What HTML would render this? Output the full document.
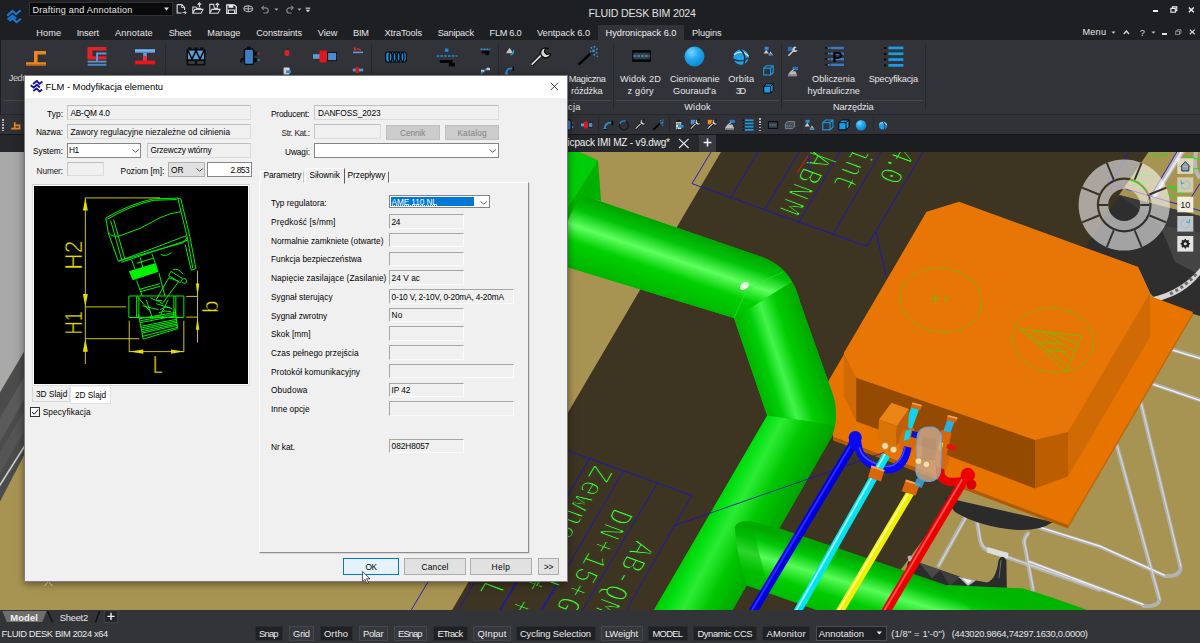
<!DOCTYPE html>
<html lang="pl">
<head>
<meta charset="utf-8">
<title>FLUID DESK BIM 2024</title>
<style>
*{box-sizing:border-box;margin:0;padding:0}
html,body{width:1200px;height:643px;overflow:hidden;background:#1e1f22;font-family:"Liberation Sans","DejaVu Sans",sans-serif;font-size:9px;color:#e4e4e4}
#app{position:absolute;left:0;top:0;width:1200px;height:643px;overflow:hidden}
#app>div,#app>svg{position:absolute}
.t{position:absolute;white-space:nowrap;line-height:1}
.b{position:absolute}
#titlebar{left:0;top:0;width:1200px;height:40px;background:#1e1f22}
#ribbon{left:0;top:40px;width:1200px;height:74px;background:#313338}
#toolbar{left:0;top:114px;width:1200px;height:20px;background:#303237;border-top:1px solid #26282b}
#doctabs{left:0;top:134px;width:1200px;height:18px;background:#1c1d20}
#view{left:0;top:152px}
#bottom{left:0;top:610px;width:1200px;height:33px;background:#323438}
#dlg{left:24px;top:75px;width:544px;height:507px;background:#f0f0f0;border:1px solid #7d7d7d;color:#000;box-shadow:0 2px 8px rgba(0,0,0,.45)}
#dlg .cap{position:absolute;left:0;top:0;width:542px;height:22px;background:#fff}
.fld{position:absolute;background:#f0f0f0;border:1px solid #dcdcdc;border-top-color:#bdbdbd;border-left-color:#c6c6c6}
.inp{position:absolute;background:#fff;border:1px solid #858585}
.btn{position:absolute;background:#e1e1e1;border:1px solid #adadad}
.sb{position:absolute;top:15.5px;height:15px;border:1px solid #46484d;background:#36383d}
.sb.on{background:#202124;border-color:#2a2c30}
.vsep{position:absolute;width:1px;background:#26282b;top:3px;height:67px}
.hsep{position:absolute;height:1px;background:#44474c;top:60px}
</style>
</head>
<body>
<div id="app">
<div id="titlebar"><svg class="b" style="left:5px;top:7.8px" width="18" height="17" viewBox="0 0 18 17" ><g fill="none" stroke="#1b78d0" stroke-width="2.1" stroke-linejoin="miter"><polyline points="2.2,7.6 7.6,3 11,6.2 15.6,2.2"/><polyline points="2.6,11.4 7.6,7.6 11.2,10.8"/><polyline points="4.2,13 7.8,10.4 11.6,14.2 15.8,10.8"/></g></svg><div class="b" style="left:29px;top:1.5px;width:144px;height:14.5px;background:#0a0a0b;border:1px solid #2f3135"></div><span class="t" id="t1" style="left:32.40px;top:5.90px;font-size:9.1px;letter-spacing:0.224px;color:#e6e6e6;">Drafting and Annotation</span><svg class="b" style="left:163px;top:7px" width="7" height="5" viewBox="0 0 7 5" ><polygon points="1,0.6 6,0.6 3.5,3.6" fill="#e0e0e0"/></svg><svg class="b" style="left:176px;top:3px" width="11" height="12" viewBox="0 0 11 12" ><path d="M1.2,1.6 H5.8 L8.6,4.4 V7 M1.2,1.6 V10 H5.6" fill="none" stroke="#d4d4d4" stroke-width="1.2"/><path d="M5.6,1.6 V4.6 H8.6" fill="none" stroke="#d4d4d4" stroke-width="0.9"/><path d="M6.6,9.6 H10 M8.6,8 L10.2,9.6 L8.6,11.2" fill="none" stroke="#d4d4d4" stroke-width="1"/></svg><svg class="b" style="left:192px;top:2px" width="12" height="13" viewBox="0 0 12 13" ><path d="M0.8,11.2 V5 H3.6 L4.6,6.2 H8.6 V7.4 M0.8,11.2 L2.8,7.4 H11 L9,11.2 Z" fill="none" stroke="#d4d4d4" stroke-width="1.1"/><path d="M7.4,5 V1.2 M5.6,2.8 L7.4,0.9 L9.2,2.8" fill="none" stroke="#d4d4d4" stroke-width="1.2"/></svg><svg class="b" style="left:208.5px;top:2px" width="12" height="13" viewBox="0 0 12 13" ><path d="M0.8,11.2 V2.4 H4.6 L5.4,6.2 H8.6 V7.4 M0.8,11.2 L2.8,7.4 H11 L9,11.2 Z" fill="none" stroke="#d4d4d4" stroke-width="1.1"/><path d="M8.4,5.4 V1.6 M6.6,3.2 L8.4,1.3 L10.2,3.2" fill="none" stroke="#d4d4d4" stroke-width="1.2"/></svg><svg class="b" style="left:226px;top:3.5px" width="11" height="10.5" viewBox="0 0 11 10.5" ><path d="M0.8,0.8 H8 L10.2,2.6 V9.6 H0.8 Z" fill="none" stroke="#ececec" stroke-width="1.3"/><rect x="2.6" y="0.8" width="4.8" height="3" fill="#ececec"/><rect x="2.4" y="6" width="6.2" height="3.6" fill="none" stroke="#ececec" stroke-width="1"/></svg><svg class="b" style="left:243px;top:5px" width="11" height="8" viewBox="0 0 11 8" ><ellipse cx="5.3" cy="3.8" rx="4.4" ry="2.9" fill="none" stroke="#b4b4b4" stroke-width="1.1"/><path d="M1,3.8 H9.6 M5.3,1 V6.6" stroke="#b4b4b4" stroke-width="1"/></svg><svg class="b" style="left:261px;top:4.5px" width="9" height="9" viewBox="0 0 9 9" ><path d="M1,2.8 H4.6 A2.6,2.6 0 0 1 4.6,8 H2.4" fill="none" stroke="#858585" stroke-width="1.2"/><path d="M2.8,0.8 L0.9,2.8 L2.8,4.8" fill="none" stroke="#858585" stroke-width="1.2"/></svg><svg class="b" style="left:273.5px;top:7.5px" width="5" height="4" viewBox="0 0 5 4" ><polygon points="0.4,0.4 4.4,0.4 2.4,2.8" fill="#a8a8a8"/></svg><svg class="b" style="left:284.5px;top:4.5px" width="9" height="9" viewBox="0 0 9 9" ><path d="M8,2.8 H4.4 A2.6,2.6 0 0 0 4.4,8 H6.6" fill="none" stroke="#858585" stroke-width="1.2"/><path d="M6.2,0.8 L8.1,2.8 L6.2,4.8" fill="none" stroke="#858585" stroke-width="1.2"/></svg><svg class="b" style="left:296.8px;top:7.5px" width="5" height="4" viewBox="0 0 5 4" ><polygon points="0.4,0.4 4.4,0.4 2.4,2.8" fill="#a8a8a8"/></svg><svg class="b" style="left:304.5px;top:6.5px" width="6" height="6" viewBox="0 0 6 6" ><rect x="0.6" y="0.6" width="4.6" height="1.1" fill="#dcdcdc"/><polygon points="0.6,2.8 5.2,2.8 2.9,5.2" fill="#dcdcdc"/></svg><span class="t" id="t2" style="left:588.40px;top:7.63px;font-size:10.6px;letter-spacing:-0.172px;color:#e2e2e2;">FLUID DESK BIM 2024</span><div class="b" style="left:1153.3px;top:10px;width:5px;height:1.5px;background:#f0f0f0"></div><svg class="b" style="left:1170px;top:5.5px" width="8" height="7.5" viewBox="0 0 8 7.5" ><rect x="0.9" y="2.4" width="4.4" height="3.8" fill="none" stroke="#f0f0f0" stroke-width="1.1"/><path d="M2.4,2.2 V0.9 H6.8 V4.6 H5.6" fill="none" stroke="#f0f0f0" stroke-width="1.1"/></svg><svg class="b" style="left:1187.5px;top:6.5px" width="7" height="6" viewBox="0 0 7 6" ><path d="M0.8,0.6 L5.8,5.2 M5.8,0.6 L0.8,5.2" stroke="#f4f4f4" stroke-width="1.4"/></svg><span class="t" id="t3" style="left:36.30px;top:29.01px;font-size:9.2px;letter-spacing:0.061px;color:#e6e6e6;">Home</span><span class="t" id="t4" style="left:76.70px;top:29.01px;font-size:9.2px;letter-spacing:-0.137px;color:#e6e6e6;">Insert</span><span class="t" id="t5" style="left:115.00px;top:29.01px;font-size:9.2px;letter-spacing:0.129px;color:#e6e6e6;">Annotate</span><span class="t" id="t6" style="left:168.70px;top:29.01px;font-size:9.2px;letter-spacing:-0.354px;color:#e6e6e6;">Sheet</span><span class="t" id="t7" style="left:207.30px;top:29.01px;font-size:9.2px;letter-spacing:-0.021px;color:#e6e6e6;">Manage</span><span class="t" id="t8" style="left:256.30px;top:29.01px;font-size:9.2px;letter-spacing:-0.077px;color:#e6e6e6;">Constraints</span><span class="t" id="t9" style="left:317.70px;top:29.01px;font-size:9.2px;letter-spacing:0.017px;color:#e6e6e6;">View</span><span class="t" id="t10" style="left:353.00px;top:29.01px;font-size:9.2px;letter-spacing:-0.172px;color:#e6e6e6;">BIM</span><span class="t" id="t11" style="left:384.60px;top:29.01px;font-size:9.2px;letter-spacing:-0.112px;color:#e6e6e6;">XtraTools</span><span class="t" id="t12" style="left:437.70px;top:29.01px;font-size:9.2px;letter-spacing:-0.214px;color:#e6e6e6;">Sanipack</span><span class="t" id="t13" style="left:489.60px;top:29.01px;font-size:9.2px;letter-spacing:-0.301px;color:#e6e6e6;">FLM 6.0</span><span class="t" id="t14" style="left:537.00px;top:29.01px;font-size:9.2px;letter-spacing:-0.011px;color:#e6e6e6;">Ventpack 6.0</span><div class="b" style="left:598px;top:25px;width:86px;height:15px;background:#313338"></div><span class="t" id="t15" style="left:605.60px;top:29.01px;font-size:9.2px;letter-spacing:-0.012px;color:#f2f2f2;">Hydronicpack 6.0</span><span class="t" id="t16" style="left:692.00px;top:29.01px;font-size:9.2px;letter-spacing:-0.090px;color:#e6e6e6;">Plugins</span><span class="t" id="t17" style="left:1082.40px;top:28.41px;font-size:9.2px;letter-spacing:0.205px;color:#e6e6e6;">Menu</span><svg class="b" style="left:1111px;top:30.8px" width="5" height="4" viewBox="0 0 5 4" ><polygon points="0.4,0.4 4.4,0.4 2.4,2.8" fill="#cfcfcf"/></svg><svg class="b" style="left:1122.5px;top:29.5px" width="7" height="5" viewBox="0 0 7 5" ><polyline points="0.8,4 3.4,1 6,4" fill="none" stroke="#d8d8d8" stroke-width="1.4"/></svg><span class="t" id="t18" style="left:1139.80px;top:27.84px;font-size:9.4px;color:#dcdcdc;">?</span><svg class="b" style="left:1150.5px;top:30.8px" width="5" height="4" viewBox="0 0 5 4" ><polygon points="0.4,0.4 4.4,0.4 2.4,2.8" fill="#bdbdbd"/></svg><div class="b" style="left:1161.5px;top:33px;width:5px;height:1.5px;background:#e0e0e0"></div><svg class="b" style="left:1174.5px;top:28.5px" width="7" height="6.5" viewBox="0 0 7 6.5" ><rect x="0.7" y="2.2" width="3.8" height="3.4" fill="none" stroke="#8c8c8c" stroke-width="1"/><path d="M2,2 V0.8 H6 V4.2 H4.8" fill="none" stroke="#8c8c8c" stroke-width="1"/></svg><svg class="b" style="left:1188.5px;top:28.5px" width="7" height="6" viewBox="0 0 7 6" ><path d="M0.8,0.6 L5.8,5.2 M5.8,0.6 L0.8,5.2" stroke="#d4d4d4" stroke-width="1.2"/></svg></div><div id="ribbon"><div class="b" style="left:0;top:0;width:1px;height:74px;background:#1e1f22"></div><svg class="b" style="left:25.5px;top:11px" width="20.5" height="14.5" viewBox="0 0 20.5 14.5" ><path d="M0,11.2 H8 V0 H20 V3.6 H11.6 V11.2 H20 V14.4 H0 Z" fill="#ea8620"/><path d="M0,13 H20 V14.4 H0Z" fill="#c86c10"/></svg><svg class="b" style="left:87px;top:7px" width="20" height="19.5" viewBox="0 0 20 19.5" ><path d="M2,0 H19.4 V3.6 H5.4 V9.2 H19.4 V12.6 H0.4 V0.6 Z" fill="#e0242a"/><path d="M9,5.4 H19.4 V7.4 H11 V13.8 H19.4 V15.4 H0.6 V13.8 H9 Z" fill="#5a96d4"/><rect x="0.6" y="16.8" width="18.8" height="2" fill="#4a86c4"/></svg><svg class="b" style="left:135px;top:9px" width="20" height="15.5" viewBox="0 0 20 15.5" ><rect x="0" y="0" width="20" height="3.8" fill="#5b9bd8"/><rect x="8.2" y="3.8" width="3.6" height="8" fill="#7a8fd0"/><rect x="8.2" y="7" width="3.6" height="5" fill="#e83040"/><rect x="0" y="11.6" width="20" height="3.8" fill="#f01418"/><rect x="0" y="1.4" width="20" height="0.8" fill="#9cc4ee"/></svg><div class="vsep" style="left:165px"></div><svg class="b" style="left:186px;top:7px" width="20" height="19" viewBox="0 0 20 19" ><rect x="0.6" y="2" width="18.8" height="16.4" rx="1.2" fill="#0c0c0c"/><rect x="2" y="0.4" width="3.6" height="3" fill="#0c0c0c"/><rect x="8" y="0.4" width="3.6" height="3" fill="#0c0c0c"/><rect x="14" y="0.4" width="3.6" height="3" fill="#0c0c0c"/><rect x="2" y="3.6" width="16" height="8.6" fill="#5d9cdb"/><path d="M2,3.6 L6,12.2 L10,3.6 L14,12.2 L18,3.6" fill="none" stroke="#0c0c0c" stroke-width="1.6"/><rect x="2.2" y="14" width="6.8" height="3" rx="1.2" fill="#3a3a3a"/><rect x="11" y="14" width="6.8" height="3" rx="1.2" fill="#3a3a3a"/></svg><svg class="b" style="left:240px;top:6px" width="21" height="20" viewBox="0 0 21 20" ><rect x="4.4" y="3" width="9.2" height="15.4" rx="1.6" fill="#3c7fc4" stroke="#0a0a0a" stroke-width="1.4"/><rect x="7" y="0.6" width="3.6" height="2.8" fill="#0a0a0a"/><path d="M4,12.6 A2.6,2.6 0 0 0 1.2,15.2 V16.6" fill="none" stroke="#0a0a0a" stroke-width="2"/><rect x="14.2" y="5.6" width="2.6" height="4" fill="#0a0a0a"/><rect x="14.2" y="12" width="2.6" height="4" fill="#0a0a0a"/><rect x="17.8" y="6.8" width="1.8" height="1.6" fill="#e02424"/><rect x="17.8" y="13.2" width="1.8" height="1.6" fill="#2a9be0"/></svg><svg class="b" style="left:283px;top:7px" width="8" height="10" viewBox="0 0 8 10" ><ellipse cx="4" cy="6" rx="2.4" ry="3.2" fill="#e02020"/><path d="M4,3 L5.6,0.6" stroke="#222" stroke-width="1.2"/></svg><svg class="b" style="left:282px;top:27px" width="10" height="8" viewBox="0 0 10 8" ><rect x="1.6" y="0.6" width="6" height="6.8" rx="1" fill="#d8d8d8"/><rect x="4" y="3.4" width="5" height="2.6" fill="#2a8fd8"/></svg><svg class="b" style="left:313px;top:10px" width="24" height="13" viewBox="0 0 24 13" ><rect x="0" y="4.2" width="24" height="4.6" fill="#5b9bd8"/><rect x="14.6" y="2.4" width="9" height="8.2" fill="#4a8ccc" stroke="#111" stroke-width="1"/><rect x="6.4" y="0.4" width="7.4" height="12.2" rx="0.8" fill="#e0161c"/></svg><svg class="b" style="left:352px;top:6.5px" width="12" height="8" viewBox="0 0 12 8" ><path d="M1,5.4 H11" stroke="#5b9bd8" stroke-width="1.6"/><path d="M2.4,4.2 A3.6,3.6 0 0 1 8.8,3.6" fill="none" stroke="#e03030" stroke-width="1.1"/><rect x="1.8" y="0.4" width="1.6" height="2.4" fill="#e03030"/></svg><svg class="b" style="left:352px;top:26px" width="12" height="8" viewBox="0 0 12 8" ><rect x="0.8" y="2.6" width="10.4" height="2.8" fill="#5b9bd8"/><rect x="3.6" y="1" width="3.4" height="6" fill="#e0161c"/></svg><div class="vsep" style="left:371px"></div><svg class="b" style="left:385px;top:11px" width="22" height="12" viewBox="0 0 22 12" ><rect x="0.6" y="1" width="20.8" height="10" rx="2.4" fill="#1a8fe0" stroke="#0a0a0a" stroke-width="1.2"/><g fill="none" stroke="#0a0a0a" stroke-width="1.5"><ellipse cx="5.6" cy="6" rx="1.5" ry="4.4"/><ellipse cx="9.6" cy="6" rx="1.5" ry="4.4"/><ellipse cx="13.6" cy="6" rx="1.5" ry="4.4"/><ellipse cx="17.4" cy="6" rx="1.5" ry="4.4"/></g></svg><svg class="b" style="left:436px;top:7.5px" width="22" height="20" viewBox="0 0 22 20" ><rect x="9" y="0.6" width="3.4" height="3.2" fill="#1a8fe0"/><path d="M0.6,8 H21.4" stroke="#1a8fe0" stroke-width="1.7" stroke-dasharray="2.6,1.2"/><path d="M3.8,12 H16.6 V15 H19 V18.4 H12.8 V15 H10 V15 H3.8 Z" fill="#050505"/></svg><svg class="b" style="left:480px;top:7px" width="11" height="9" viewBox="0 0 11 9" ><path d="M0.6,2.2 H10.4" stroke="#2a9be0" stroke-width="1.6" stroke-dasharray="2,0.9"/><rect x="1.6" y="4" width="7.8" height="2.4" fill="#060606"/><rect x="5.4" y="6" width="3.4" height="2.2" fill="#060606"/></svg><svg class="b" style="left:480px;top:26px" width="11" height="9" viewBox="0 0 11 9" ><path d="M1,7.6 L8.6,1.2" stroke="#2a8fd8" stroke-width="1.4"/><rect x="6.6" y="2" width="3.4" height="2.2" fill="#c8c8c8"/><rect x="1" y="3.8" width="3" height="2" fill="#c8c8c8"/></svg><div class="vsep" style="left:498px"></div><svg class="b" style="left:504px;top:7px" width="11" height="9" viewBox="0 0 11 9" ><path d="M2,6.2 L5.6,0.8 L9.2,6.2 Z" fill="#c4c4c4"/><path d="M9.4,3 A3.4,3.4 0 0 1 6.4,7.8" fill="none" stroke="#2a9be0" stroke-width="1.3"/></svg><svg class="b" style="left:504px;top:26px" width="11" height="9" viewBox="0 0 11 9" ><path d="M1,7.6 H4 M2.2,7.6 C2.4,3.8 5,2.2 8.2,2.2" fill="none" stroke="#2a8fd8" stroke-width="1.6"/><path d="M9.4,0.6 V5" stroke="#0a0a0a" stroke-width="1.4"/></svg><svg class="b" style="left:531px;top:7px" width="22" height="20" viewBox="0 0 22 20" ><path d="M1.2,17.2 L11.4,7" stroke="#060606" stroke-width="3.6" stroke-linecap="round"/><path d="M1.2,17.2 L11.4,7" stroke="#d8d8d8" stroke-width="1.8" stroke-linecap="round"/><path d="M17.4,1.6 A5,5 0 1 0 19.6,6.6 L15.6,7.4 L13.4,5 L14.4,1 Z" fill="#d8d8d8" stroke="#060606" stroke-width="1.2" stroke-linejoin="round"/></svg><svg class="b" style="left:577px;top:5px" width="22" height="22" viewBox="0 0 22 22" ><path d="M1.6,19.6 L13.4,8.6" stroke="#050505" stroke-width="2.4"/><g fill="#2a9be0"><rect x="13.6" y="2" width="1.6" height="1.6"/><rect x="16.6" y="1" width="1.6" height="1.6"/><rect x="19" y="3.4" width="1.6" height="1.6"/><rect x="15.4" y="4.6" width="2.4" height="2.4"/><rect x="18.8" y="7" width="1.6" height="1.6"/><rect x="16.4" y="9" width="1.6" height="1.6"/><rect x="19.6" y="10.6" width="1.4" height="1.4"/><rect x="13" y="5.6" width="1.4" height="1.4"/></g></svg><span class="t" id="t19" style="left:8.80px;top:33.81px;font-size:9.2px;letter-spacing:-0.446px;color:#cfcfcf;">Jedn</span><span class="t" id="t20" style="left:568.70px;top:35.11px;font-size:9.2px;letter-spacing:-0.290px;color:#e6e6e6;">Magiczna</span><span class="t" id="t21" style="left:571.00px;top:46.71px;font-size:9.2px;letter-spacing:-0.112px;color:#e6e6e6;">różdżka</span><span class="t" id="t22" style="left:529.00px;top:63.01px;font-size:9.2px;letter-spacing:0.288px;color:#e6e6e6;">Modyfikacja</span><div class="hsep" style="left:500px;width:111px"></div><div class="hsep" style="left:4px;width:159px"></div><div class="vsep" style="left:613px"></div><svg class="b" style="left:631.5px;top:10px" width="19" height="12" viewBox="0 0 19 12" ><rect x="0.8" y="0.6" width="17.4" height="10.8" fill="#3a3d42" stroke="#0a0a0a" stroke-width="1.2"/><rect x="0.8" y="0.6" width="17.4" height="2.2" fill="#0a0a0a"/><rect x="0.8" y="9.2" width="17.4" height="2.2" fill="#0a0a0a"/><path d="M1.6,6 H17.6" stroke="#2a9be0" stroke-width="1.6" stroke-dasharray="2.6,1.2"/></svg><svg class="b" style="left:684px;top:6.2px" width="21" height="21" viewBox="0 0 21 21" ><defs><radialGradient id="sph" cx="0.36" cy="0.3" r="0.75"><stop offset="0" stop-color="#7fd4ff"/><stop offset="0.45" stop-color="#22aaf0"/><stop offset="1" stop-color="#0b86d0"/></radialGradient></defs><circle cx="10.5" cy="10.5" r="10" fill="url(#sph)"/></svg><svg class="b" style="left:731px;top:6.5px" width="20" height="20" viewBox="0 0 20 20" ><circle cx="10" cy="10.2" r="7.6" fill="#22a0ea"/><path d="M3,7.6 C8,3.6 13.6,4.4 17.6,9.4" fill="none" stroke="#e4e4e4" stroke-width="1.3"/><path d="M9.2,2.4 C14,6.4 15,12 12.8,17.6" fill="none" stroke="#2c2c2c" stroke-width="1.5"/><path d="M2.6,12.4 C8,15 13,14.2 17.4,10.8" fill="none" stroke="#2c2c2c" stroke-width="1.3"/></svg><svg class="b" style="left:762.5px;top:5.5px" width="11" height="10" viewBox="0 0 11 10" ><rect x="1.6" y="0.8" width="4" height="3" fill="#2a8fd8"/><path d="M0.6,7.4 L3.2,3.8 L5.8,7.4 Z" fill="#c8c8c8"/><path d="M5.2,9.2 L7.6,5.6 L10,9.2 Z" fill="#c8c8c8"/><rect x="6" y="7.4" width="3.4" height="1.8" fill="#2a8fd8"/></svg><svg class="b" style="left:762.5px;top:24.5px" width="11" height="11" viewBox="0 0 11 11" ><g fill="none" stroke="#1a9be6" stroke-width="1.1"><rect x="0.8" y="3.2" width="6.8" height="6.8"/><path d="M0.8,3.2 L3.4,0.8 H10.2 V7.4 L7.6,10 M7.6,3.2 L10.2,0.8"/></g></svg><svg class="b" style="left:762.5px;top:43px" width="11" height="11" viewBox="0 0 11 11" ><path d="M0.8,3.2 L3.4,0.8 H10.2 V7.4 L7.6,10 H0.8 Z" fill="#1a9be6" stroke="#0a0a0a" stroke-width="1"/><path d="M0.8,3.2 H7.6 V10 M7.6,3.2 L10.2,0.8" fill="none" stroke="#0a0a0a" stroke-width="1"/></svg><span class="t" id="t23" style="left:620.00px;top:35.11px;font-size:9.2px;letter-spacing:0.167px;color:#e6e6e6;">Widok 2D</span><span class="t" id="t24" style="left:627.50px;top:46.71px;font-size:9.2px;letter-spacing:0.234px;color:#e6e6e6;">z góry</span><span class="t" id="t25" style="left:670.00px;top:35.11px;font-size:9.2px;letter-spacing:-0.056px;color:#e6e6e6;">Cieniowanie</span><span class="t" id="t26" style="left:673.00px;top:46.71px;font-size:9.2px;letter-spacing:0.047px;color:#e6e6e6;">Gouraud'a</span><span class="t" id="t27" style="left:728.30px;top:35.11px;font-size:9.2px;letter-spacing:0.174px;color:#e6e6e6;">Orbita</span><span class="t" id="t28" style="left:735.70px;top:46.71px;font-size:9.2px;letter-spacing:-1.200px;color:#e6e6e6;">3D</span><div class="hsep" style="left:615.5px;width:163px"></div><span class="t" id="t29" style="left:684.20px;top:63.01px;font-size:9.2px;letter-spacing:0.242px;color:#e6e6e6;">Widok</span><div class="vsep" style="left:780.5px"></div><svg class="b" style="left:787px;top:5.5px" width="12" height="11" viewBox="0 0 12 11" ><rect x="0.8" y="0.8" width="4.6" height="4.2" fill="#2a6fb8"/><path d="M1.4,9.8 L6.4,4.8" stroke="#d0d0d0" stroke-width="1.5"/><path d="M9.6,1.2 A2.6,2.6 0 1 0 10.6,4 L8.4,4.4 L7.4,3 Z" fill="#d0d0d0"/></svg><svg class="b" style="left:787px;top:25.5px" width="12" height="11" viewBox="0 0 12 11" ><rect x="5.4" y="0.8" width="5.6" height="3.4" fill="#2a6fb8"/><path d="M1,8.8 L3.4,5.2 H8.4 L10,8.8 Z" fill="#b8b8b8"/><rect x="1" y="8.8" width="9" height="1.6" fill="#8a8a8a"/><path d="M4,5.4 L7.2,3.4" stroke="#d0d0d0" stroke-width="1"/></svg><svg class="b" style="left:824px;top:6px" width="21" height="21" viewBox="0 0 21 21" ><g fill="#3a78c0"><rect x="6.4" y="0.8" width="13.6" height="2.4"/><rect x="6.4" y="6.4" width="13.6" height="2.4"/><rect x="6.4" y="12" width="13.6" height="2.4"/><rect x="6.4" y="17.6" width="13.6" height="2.4"/></g><g fill="#0a0a0a"><rect x="1.2" y="1.2" width="1.6" height="1.6"/><rect x="1.2" y="6.8" width="1.6" height="1.6"/><rect x="1.2" y="12.4" width="1.6" height="1.6"/><rect x="1.2" y="18" width="1.6" height="1.6"/></g><g fill="#2a9be0"><rect x="4" y="1.2" width="1.6" height="1.6"/><rect x="4" y="6.8" width="1.6" height="1.6"/><rect x="4" y="12.4" width="1.6" height="1.6"/><rect x="4" y="18" width="1.6" height="1.6"/></g><text x="8.2" y="16.2" font-family="Liberation Sans, DejaVu Sans, sans-serif" font-weight="bold" font-size="15.5" fill="#050505">P</text></svg><svg class="b" style="left:882.5px;top:6px" width="21" height="21" viewBox="0 0 21 21" ><g fill="#1a9be6"><rect x="5.4" y="0.6" width="15" height="2.7"/><rect x="5.4" y="6.4" width="15" height="2.7"/><rect x="5.4" y="12.2" width="15" height="2.7"/><rect x="5.4" y="18" width="15" height="2.7"/></g><g fill="#050505"><rect x="1.2" y="1" width="2" height="2"/><rect x="1.2" y="6.8" width="2" height="2"/><rect x="1.2" y="12.6" width="2" height="2"/><rect x="1.2" y="18.4" width="2" height="2"/></g></svg><span class="t" id="t30" style="left:812.00px;top:35.11px;font-size:9.2px;letter-spacing:0.010px;color:#e6e6e6;">Obliczenia</span><span class="t" id="t31" style="left:807.50px;top:46.71px;font-size:9.2px;letter-spacing:0.082px;color:#e6e6e6;">hydrauliczne</span><span class="t" id="t32" style="left:868.70px;top:35.11px;font-size:9.2px;letter-spacing:-0.207px;color:#e6e6e6;">Specyfikacja</span><div class="hsep" style="left:783px;width:140px"></div><span class="t" id="t33" style="left:833.00px;top:63.01px;font-size:9.2px;letter-spacing:-0.084px;color:#e6e6e6;">Narzędzia</span><div class="vsep" style="left:925px"></div></div><div id="toolbar"><div class="b" style="left:2.2px;top:4.2px;width:1.8px;height:12.3px;background:repeating-linear-gradient(#b4b4b4 0 1.5px,transparent 1.5px 2.7px)"></div><svg class="b" style="left:10px;top:6px" width="12" height="10" viewBox="0 0 12 10" ><path d="M4.7,1.2 V7.4 M4.7,4.4 H9.6 V7.4 M1.2,7.6 H10.4" fill="none" stroke="#ea8620" stroke-width="1.7"/></svg><svg class="b" style="left:563.0px;top:4px" width="12" height="12" viewBox="0 0 12 12" ><rect x="2" y="1" width="6" height="10" rx="1" fill="#3c7fc4" stroke="#0a0a0a" stroke-width="1"/><rect x="9" y="3" width="1.4" height="1.4" fill="#e02424"/><rect x="9" y="7.4" width="1.4" height="1.4" fill="#2a9be0"/></svg><svg class="b" style="left:580.7px;top:4px" width="12" height="12" viewBox="0 0 12 12" ><rect x="0" y="4.4" width="12" height="3" fill="#5b9bd8"/><rect x="7.4" y="3.4" width="4.4" height="5" fill="#4a8ccc" stroke="#111" stroke-width="0.7"/><rect x="3" y="2.4" width="4" height="7" rx="0.6" fill="#e0161c"/></svg><div class="b" style="left:597.5px;top:2px;width:1px;height:15px;background:#26282b"></div><svg class="b" style="left:601.5px;top:4px" width="12" height="12" viewBox="0 0 12 12" ><path d="M1,10.2 H4.6 M2.6,10.2 C2.8,5.6 5.6,3.6 9,3.6" fill="none" stroke="#2a8fd8" stroke-width="1.7"/><path d="M10.4,1.4 V6.2" stroke="#0a0a0a" stroke-width="1.6"/><path d="M1,10.6 H5.4" stroke="#0a0a0a" stroke-width="1"/></svg><svg class="b" style="left:618.0px;top:4px" width="12" height="12" viewBox="0 0 12 12" ><circle cx="6" cy="6.4" r="4.4" fill="none" stroke="#16181a" stroke-width="1.3"/><path d="M2,4.6 A4.4,4.4 0 0 1 7.6,2.2" fill="none" stroke="#2a8fd8" stroke-width="1.5"/></svg><svg class="b" style="left:635.0px;top:4px" width="12" height="12" viewBox="0 0 12 12" ><path d="M1,9.4 L6,4.4" stroke="#0a0a0a" stroke-width="2.4" stroke-linecap="round"/><path d="M1,9.4 L6,4.4" stroke="#d4d4d4" stroke-width="1.2" stroke-linecap="round"/><path d="M9.4,0.8 A2.8,2.8 0 1 0 10.6,3.8 L8.4,4.2 L7.2,2.8 L7.8,0.8 Z" fill="#d4d4d4" stroke="#0a0a0a" stroke-width="0.7"/></svg><svg class="b" style="left:652.0px;top:4px" width="12" height="12" viewBox="0 0 12 12" ><path d="M1,11 L8,4.4" stroke="#050505" stroke-width="1.8"/><g fill="#2a8fd8"><rect x="8" y="1" width="1.4" height="1.4"/><rect x="10" y="2.6" width="1.4" height="1.4"/><rect x="8.6" y="3.4" width="1.8" height="1.8"/><rect x="10.4" y="0.4" width="1.2" height="1.2"/><rect x="10.2" y="5.6" width="1.2" height="1.2"/></g></svg><div class="b" style="left:669px;top:2px;width:1px;height:15px;background:#26282b"></div><svg class="b" style="left:673.0px;top:4px" width="12" height="12" viewBox="0 0 12 12" ><rect x="2.4" y="2.6" width="6.4" height="8" rx="1" fill="#d8d8d8" stroke="#1a1a1a" stroke-width="0.9"/><rect x="3.6" y="0.8" width="4" height="2" fill="#1a1a1a"/><rect x="5" y="6" width="5.6" height="2.6" fill="#2a8fd8"/><path d="M3.4,5 H7.6 M3.4,9 H5" stroke="#1a1a1a" stroke-width="0.8"/></svg><svg class="b" style="left:690.0px;top:4px" width="12" height="12" viewBox="0 0 12 12" ><rect x="0.8" y="0.8" width="4.6" height="4.6" fill="#4a90d8"/><path d="M1,9.4 L6,4.4" stroke="#0a0a0a" stroke-width="2.4" stroke-linecap="round"/><path d="M1,9.4 L6,4.4" stroke="#d4d4d4" stroke-width="1.2" stroke-linecap="round"/><path d="M9.4,0.8 A2.8,2.8 0 1 0 10.6,3.8 L8.4,4.2 L7.2,2.8 L7.8,0.8 Z" fill="#d4d4d4" stroke="#0a0a0a" stroke-width="0.7"/></svg><svg class="b" style="left:706.5px;top:4px" width="12" height="12" viewBox="0 0 12 12" ><rect x="0.8" y="0.8" width="4.6" height="4.6" fill="#f08a1c"/><path d="M1,9.4 L6,4.4" stroke="#0a0a0a" stroke-width="2.4" stroke-linecap="round"/><path d="M1,9.4 L6,4.4" stroke="#d4d4d4" stroke-width="1.2" stroke-linecap="round"/><path d="M9.4,0.8 A2.8,2.8 0 1 0 10.6,3.8 L8.4,4.2 L7.2,2.8 L7.8,0.8 Z" fill="#d4d4d4" stroke="#0a0a0a" stroke-width="0.7"/></svg><svg class="b" style="left:724.0px;top:4px" width="12" height="12" viewBox="0 0 12 12" ><rect x="5.6" y="0.8" width="5.4" height="3.2" fill="#2a78c8"/><path d="M1,9 L3.4,5.4 H8.4 L10,9 Z" fill="#bdbdbd"/><rect x="1" y="9" width="9" height="1.8" fill="#8a8a8a"/><path d="M4,5.6 L7.2,3.6" stroke="#d0d0d0" stroke-width="1"/></svg><svg class="b" style="left:741.5px;top:4px" width="12" height="12" viewBox="0 0 12 12" ><g fill="#1a9be6"><rect x="3" y="0.4" width="8.6" height="1.7"/><rect x="3" y="3.6" width="8.6" height="1.7"/><rect x="3" y="6.8" width="8.6" height="1.7"/><rect x="3" y="10" width="8.6" height="1.7"/></g><g fill="#050505"><rect x="0.6" y="0.6" width="1.2" height="1.2"/><rect x="0.6" y="3.8" width="1.2" height="1.2"/><rect x="0.6" y="7" width="1.2" height="1.2"/><rect x="0.6" y="10.2" width="1.2" height="1.2"/></g></svg><div class="b" style="left:759.2px;top:3px;width:2px;height:13.4px;background:repeating-linear-gradient(#b0b0b0 0 1.7px,transparent 1.7px 2.9px)"></div><svg class="b" style="left:766.5px;top:4px" width="12" height="12" viewBox="0 0 12 12" ><rect x="1.4" y="2.6" width="9.2" height="6.8" fill="#3a3d42" stroke="#0a0a0a" stroke-width="1"/><path d="M2.4,6 H9.8" stroke="#2a9be0" stroke-width="1.2" stroke-dasharray="1.6,0.8"/></svg><svg class="b" style="left:784.0px;top:4px" width="12" height="12" viewBox="0 0 12 12" ><path d="M1.4,4.6 L3.4,2.6 H10.6 V7.6 L8.6,9.6 H1.4 Z" fill="#4a4d52" stroke="#8a8a8a" stroke-width="0.9"/><path d="M2.4,7 H8" stroke="#2a9be0" stroke-width="1.1" stroke-dasharray="1.6,0.8"/></svg><div class="b" style="left:800.5px;top:2px;width:1px;height:15px;background:#26282b"></div><svg class="b" style="left:804.0px;top:4px" width="12" height="12" viewBox="0 0 12 12" ><rect x="1.6" y="0.8" width="4" height="3" fill="#2a8fd8"/><path d="M0.6,7.4 L3.2,3.8 L5.8,7.4 Z" fill="#c8c8c8"/><path d="M5.4,10.6 L8,6.4 L10.6,10.6 Z" fill="#c8c8c8"/><rect x="6.2" y="8.6" width="3.6" height="2" fill="#2a8fd8"/></svg><svg class="b" style="left:821.5px;top:4px" width="12" height="12" viewBox="0 0 12 12" ><g fill="none" stroke="#1a9be6" stroke-width="1.1"><rect x="0.8" y="3.6" width="7.2" height="7.2"/><path d="M0.8,3.6 L3.6,1 H11 V8 L8,10.8 M8,3.6 L11,1"/></g></svg><svg class="b" style="left:838.0px;top:4px" width="12" height="12" viewBox="0 0 12 12" ><path d="M0.8,3.6 L3.6,1 H11 V8 L8,10.8 H0.8 Z" fill="#1a9be6" stroke="#0a0a0a" stroke-width="1"/><path d="M0.8,3.6 H8 V10.8 M8,3.6 L11,1" fill="none" stroke="#0a0a0a" stroke-width="1"/></svg><svg class="b" style="left:855.0px;top:4px" width="12" height="12" viewBox="0 0 12 12" ><defs><radialGradient id="sph2" cx="0.36" cy="0.3" r="0.75"><stop offset="0" stop-color="#7fd4ff"/><stop offset="0.45" stop-color="#22aaf0"/><stop offset="1" stop-color="#0b86d0"/></radialGradient></defs><circle cx="6" cy="6.2" r="5.2" fill="url(#sph2)"/></svg><div class="b" style="left:872.5px;top:2px;width:1px;height:15px;background:#26282b"></div><svg class="b" style="left:876.5px;top:4px" width="12" height="12" viewBox="0 0 12 12" ><circle cx="6" cy="6.4" r="4" fill="#22a0ea"/><path d="M2.4,5 C5,3 8,3.4 10,6" fill="none" stroke="#e4e4e4" stroke-width="0.9"/><path d="M5.6,2.4 C8,4.6 8.4,7.6 7.4,10.4" fill="none" stroke="#2c2c2c" stroke-width="1"/></svg></div><div id="doctabs"><div class="b" style="left:0;top:0;width:1200px;height:1px;background:#151618"></div><div class="b" style="left:0px;top:1px;width:698.5px;height:17px;background:#26282c"></div><div class="b" style="left:698.7px;top:1px;width:17px;height:17px;background:#37393e"></div><span class="t" id="t34" style="left:536.50px;top:3.94px;font-size:10px;letter-spacing:-0.194px;color:#f0f0f0;">Hydronicpack IMI MZ - v9.dwg*</span><svg class="b" style="left:678px;top:3.6px" width="12" height="11" viewBox="0 0 12 11"><path d="M1,0.8 L10.6,10 M10.6,0.8 L1,10" stroke="#ececec" stroke-width="1.1"/></svg><svg class="b" style="left:702.5px;top:4.4px" width="9" height="9" viewBox="0 0 9 9"><path d="M0.6,4.5 H8.4 M4.5,0.6 V8.4" stroke="#f4f4f4" stroke-width="1.5"/></svg></div><svg id="view" width="1200" height="458" viewBox="0 152 1200 458">
<defs>
<linearGradient id="gp1" gradientUnits="userSpaceOnUse" x1="668" y1="225" x2="644.8" y2="293.4">
<stop offset="0" stop-color="#00a400"/><stop offset="0.2" stop-color="#00c408"/><stop offset="0.42" stop-color="#60ff60"/><stop offset="0.64" stop-color="#00d000"/><stop offset="1" stop-color="#00b400"/>
</linearGradient>
<linearGradient id="gp2" gradientUnits="userSpaceOnUse" x1="752" y1="362" x2="820" y2="340">
<stop offset="0" stop-color="#00b800"/><stop offset="0.18" stop-color="#00d008"/><stop offset="0.36" stop-color="#44f44c"/><stop offset="0.58" stop-color="#00cc00"/><stop offset="1" stop-color="#009c00"/>
</linearGradient>
<linearGradient id="gp3" gradientUnits="userSpaceOnUse" x1="708" y1="510" x2="780" y2="548">
<stop offset="0" stop-color="#00cc04"/><stop offset="0.12" stop-color="#00e010"/><stop offset="0.3" stop-color="#2cec34"/><stop offset="0.55" stop-color="#00c800"/><stop offset="0.85" stop-color="#00a800"/><stop offset="1" stop-color="#009800"/>
</linearGradient>
<linearGradient id="gp4" gradientUnits="userSpaceOnUse" x1="872" y1="563" x2="851" y2="632">
<stop offset="0" stop-color="#00a800"/><stop offset="0.16" stop-color="#00c808"/><stop offset="0.36" stop-color="#58fc58"/><stop offset="0.6" stop-color="#00cc00"/><stop offset="1" stop-color="#00b000"/>
</linearGradient>
<linearGradient id="bl" x1="0" y1="0" x2="1" y2="0.55"><stop offset="0" stop-color="#0000c8"/><stop offset="0.4" stop-color="#1c1cff"/><stop offset="1" stop-color="#0000b0"/></linearGradient>
<linearGradient id="cy" x1="0" y1="0" x2="1" y2="0.55"><stop offset="0" stop-color="#00c8d8"/><stop offset="0.4" stop-color="#30f4ff"/><stop offset="1" stop-color="#00b4c8"/></linearGradient>
<linearGradient id="ye" x1="0" y1="0" x2="1" y2="0.55"><stop offset="0" stop-color="#e0dc00"/><stop offset="0.4" stop-color="#ffff30"/><stop offset="1" stop-color="#d0c800"/></linearGradient>
<linearGradient id="re" x1="0" y1="0" x2="1" y2="0.55"><stop offset="0" stop-color="#d80000"/><stop offset="0.4" stop-color="#ff2020"/><stop offset="1" stop-color="#c00000"/></linearGradient>
<clipPath id="vp"><rect x="0" y="152" width="1200" height="458"/></clipPath>
</defs>
<g clip-path="url(#vp)">
<!-- ground -->
<rect x="0" y="152" width="1200" height="458" fill="#a89452"/>
<!-- dark floor band -->
<polygon points="721,152 1148.5,152 1119,195 1060,300 955,497 908,560 870,611 451.5,611 468.5,582" fill="#3e3422"/>
<!-- left grey objects -->
<polygon points="0,152 24,152 24,351.7 0,392.5" fill="#a8a8a8"/>
<polygon points="0,392.5 24,351.7 24,455.4 0,501.6" fill="#4b4b4b"/>
<polygon points="0,418 24,377 24,400 0,442" fill="#5a5a5a"/>
<polygon points="0,452 24,411 24,432 0,473" fill="#545454"/>
<polygon points="0,483.4 24,445.6 24,448.4 0,486.4" fill="#d0d0d0"/>
<!-- annotation frames (blue) -->
<g fill="none" stroke="#1616c4" stroke-width="0.9">
<path d="M692,183.6 L867,246.4 M692,183.6 L711,152 M731,197 L758,152 M765,209 L799,152 M799,222 L840,152 M833,234 L881,152 M867,246.4 L923,152 M876,232 L886.7,278"/>
<path d="M560,447.9 L691.6,495.4 L626,611 M589.4,458.7 L500,611 M623.4,470.8 L541.8,611 M657.4,482.8 L582,611"/>
<path d="M428,581.8 L410.7,611 M475,581.8 L457.5,611 M516.4,581.8 L499,611 M557.9,581.8 L540.5,611"/>
</g>
<!-- annotation texts (green CAD lettering lying on the floor) -->
<g font-family="Liberation Mono, DejaVu Sans Mono, monospace" fill="#38ff38" stroke="#3e3422" stroke-width="1" font-size="25">
<text transform="matrix(-0.506,0.862,-1.19,-0.445,813.3,150.5)" letter-spacing="3">ABNM</text>
<text transform="matrix(-0.506,0.862,-1.19,-0.445,871.2,118.4)" letter-spacing="0.7">Point</text>
<text transform="matrix(-0.506,0.862,-1.19,-0.445,897.3,145.5)" letter-spacing="-3.3">4.0</text>
<text transform="matrix(-0.506,0.862,-1.19,-0.445,594.6,464.3)" letter-spacing="1.8">Zewnet</text>
<text transform="matrix(-0.506,0.862,-1.19,-0.445,614.7,507.1)" letter-spacing="2">DN+15+G</text>
<text transform="matrix(-0.506,0.862,-1.19,-0.445,636.1,539.2)" letter-spacing="1.8">AB-QM</text>
<text transform="matrix(-0.506,0.862,-1.19,-0.445,486.3,579.5)" letter-spacing="2">L</text>
<text transform="matrix(-0.506,0.862,-1.19,-0.445,529.1,574.0)" letter-spacing="2">+</text>
<text transform="matrix(-0.506,0.862,-1.19,-0.445,515.6,596.5)" letter-spacing="2">+</text>
<text transform="matrix(-0.506,0.862,-1.19,-0.445,550.6,559.5)" letter-spacing="2">-L</text>
</g>
<path d="M797,173 L810,152.6" stroke="#e02020" stroke-width="1" fill="none"/><path d="M809,152.6 L809,170" stroke="#1616c4" stroke-width="0.9" fill="none"/><path d="M810,152.6 L836,162" stroke="#2ce02c" stroke-width="1" fill="none"/>
<!-- green block top-left -->
<polygon points="567,152 578.7,152 598,160.4 601,201 586,197 567,230" fill="#00b000"/>
<polygon points="567,152 578.7,152 598,160.4 567,209" fill="#00cc0a"/>
<!-- tan/wire area right: wireframe -->
<g fill="none" stroke="#b2b2b2" stroke-width="4" stroke-linecap="round" stroke-linejoin="round">
<path d="M966.7,515 L938.6,566"/><path d="M909.6,557.6 L910.6,559.6"/>
<path d="M976.7,520 L980,540 Q982,550 992,552 L1100,590"/>
<path d="M1028,533 Q1022,540 1025,547 L1033,590"/>
<path d="M1040,528 L1100,546.7 L1164.8,575.9"/>
<path d="M1028,561.7 L1143.5,605"/>
<path d="M1140.9,403 L1180.7,567.9 Q1180,577 1164.8,575.9"/>
<path d="M1116.9,445.5 L1159.5,599.8 Q1158,607 1143.5,606"/>
<path d="M1172.8,349.8 L1200,357.8 M1154,384.4 L1200,400"/>
</g>
<g fill="none" stroke="#f2f2f2" stroke-width="1.4" stroke-linecap="round"><path d="M1041,527.6 L1100,546.2 L1164,575.2 M1173.4,350.4 L1200,358.4 M1154,384.6 L1200,400.4 M1028.6,561.4 L1143,604.4"/></g><g fill="none" stroke="#d4d4d4" stroke-width="1.2" stroke-linecap="round"><path d="M1141.4,404 L1181,567 M1117.4,446.4 L1160,599.4 M967,516 L939,565.4 M977.4,521 L980.6,540 Q982.6,549.6 992.6,551.6 L1100,589.4 M1028.4,534 Q1022.6,540 1025.6,547 L1033.4,589"/></g>
<!-- black things -->
<path d="M943,497 L1053,522 Q1040,531 1017,530 Q980,527 955,512 Z" fill="#2b2b2b"/>
<!-- dark sphere object top right -->
<path d="M1119,195 L1200,216 L1200,316 L1160,304 L1150,293 L1138,267 L1085,248 Z" fill="#2e2e2e"/>
<path d="M1119,195 L1160,225 L1200,232 L1200,216 Z" fill="#3a3a3a"/>
<path d="M1160,225 L1200,232 L1200,275 L1175,262 Z" fill="#444"/>
<path d="M1153,297 Q1182,290 1200,268 L1200,275 Q1184,295 1156,301.6 Z" fill="#d4d4d4"/><path d="M1170,294 Q1186,286 1196,274" fill="none" stroke="#6a6a6a" stroke-width="3" stroke-dasharray="3,3"/>
<path d="M1176.8,152 L1185,152 L1156.6,197.5 L1150.5,197.5 Z" fill="#b4b4b4"/>
<path d="M1180,152 L1183.4,152 L1155,197.5 L1152.6,197.5 Z" fill="#e6e6e6"/>
<path d="M1196,152 Q1193,170 1200,178" fill="none" stroke="#b8b8b8" stroke-width="4"/>
<!-- blue lines / green scribbles on tan top right -->
<g fill="none" stroke="#1616c4" stroke-width="0.9"><path d="M1129.3,152 L1110.6,184.4 L1200,210.7 M1176.8,152 L1146,204 M1200,183.4 L1189,201"/></g>
<g fill="none" stroke="#20dc20" stroke-width="1.1"><path d="M1149,153.6 Q1158,158.6 1168,154 M1134,173.6 L1154,176.4 L1136,174 M1130,180.6 L1149,183.4 L1132,181.2 L1146,190 M1167,185.6 L1184,194.6 L1169,186.6 L1180,188 M1166,192.6 L1178,199 M1184,158 Q1192,156 1200,160 M1186,168 Q1194,170 1200,168"/></g>
<!-- orange base plate -->
<polygon points="926.7,211.7 826.7,384 833,437 1068,525 1193,312 1150,296 1000,250" fill="#e87400"/>
<polygon points="833,437 1068,525 1068,528.4 833,440.4" fill="#b45a04"/>
<polygon points="1068,525 1193,312 1193,315 1068,528.4" fill="#c86606"/>
<!-- box faces -->
<polygon points="959,201.7 926.7,211.7 843.8,353 856.2,377.8 1035,440 1068,432 1150,293 1138,267" fill="#e87606"/>
<polygon points="843.8,353 856.2,377.8 856.2,421.3 843.8,396.5" fill="#cf6a06"/>
<polygon points="856.2,377.8 1035,440 1035,488.5 856.2,421.3" fill="#944a00"/>
<polygon points="1035,440 1068,432 1068,476.5 1035,488.5" fill="#bc5e00"/>
<polygon points="1068,432 1150,293 1150,337 1068,476.5" fill="#d06a04"/>
<!-- symbols on top face -->
<g fill="none" stroke="#5ac800" stroke-width="0.8" stroke-dasharray="9,2,2,2">
<ellipse cx="941" cy="300" rx="41" ry="32" transform="rotate(8 941 300)"/>
<ellipse cx="1053" cy="340" rx="41" ry="32" transform="rotate(8 1053 340)"/>
</g>
<g fill="none" stroke="#5ac800" stroke-width="0.9"><path d="M930,298 L941,299 M936,294 L935,304 M944,302 L948,296"/><path d="M1020,329 L1082,336 L1066,372 Z M1027,333 L1066,365 M1034,331 L1070,358 M1042,332 L1074,351 M1050,333 L1078,344 M1038,342 L1060,344 M1046,350 L1066,352"/></g>
<!-- green pipe upper -->
<path d="M567,224 Q573,203 586,196.5 L762,257 Q792,268 800,302 L832,392 Q838,410 835,425 Q833,436 829.4,440.8 L732,611 L653.4,611 L767.2,415.6 L734,318 L567,267 Z" fill="#00c400"/>
<path d="M567,224 Q573,203 586,196.5 L762,257 Q782,264 792,282 L740,314 L734,318 L567,267 Z" fill="url(#gp1)"/>
<path d="M734,318 L792,282 Q798,292 800,302 L832,392 Q838,410 835,425 L767.2,415.6 Z" fill="url(#gp2)"/>
<path d="M767.2,415.6 L835,425 Q833,436 829.4,440.8 L732,611 L653.4,611 Z" fill="url(#gp3)"/>
<path d="M734,318 L747,289 L783,272" fill="none" stroke="#30f03a" stroke-width="1" opacity="0.55"/>
<ellipse cx="744.4" cy="286" rx="5" ry="3.2" transform="rotate(-35 744.4 286)" fill="#e8ffe8"/>
<!-- lower green pipe -->
<polygon points="987.3,547 1008.4,553 1008,558.4 987,552.6" fill="#dedede"/>
<path d="M908,561.6 L919,562.4 L965,578.4 L987,582.4 Q996,580 998.6,560 Q1002,553.6 1006.4,560 L1006.8,588 L946,587 L906,572 Z" fill="#2c2c2c"/>
<path d="M919,562.4 L940,570 L932,578 Z" fill="#4a4a4a"/><path d="M940,570 L960,577 L950,586 Z" fill="#3e3e3e"/><path d="M958,576.4 L976,580.6 L968,586 Z" fill="#b4b4b4"/><path d="M962,578 L972,580.4 L968,584 Z" fill="#f0f0f0"/>
<path d="M1001,560 Q1000,570 999,578" fill="none" stroke="#6e6e6e" stroke-width="1"/>
<path d="M734.7,527 Q738,520 752,521.6 L783,529.4 L946,585 L1000,587.4 L1023,588.4 L1050,597 L1090,611 L819,611 L747,585.5 Q737,556 734.7,527 Z" fill="url(#gp4)"/>
<path d="M946,585 L1000,587.4 L1023,588.4 L1050,597 L1090,611 L972,611 Z" fill="#00c400" opacity="0.5"/>
<path d="M734.7,527 Q738,520 752,521.6 Q760,560 770,594 L747,585.5 Q737,556 734.7,527 Z" fill="#00b000" opacity="0.5"/>
<!-- leader line -->
<path d="M674.3,525.6 L884,452.5" stroke="#1414c8" stroke-width="0.8" fill="none"/>
<!-- colored pipes -->
<g stroke-linecap="butt" fill="none">
<path d="M916.8,404 L908,428" stroke="#10d4ea" stroke-width="8"/>
<path d="M952.4,417 L943,442" stroke="#28b0e0" stroke-width="7.4"/>
<path d="M857.8,444 Q860,466 889,469.6 Q905,468 907.6,446 L914,432" stroke="#0a0af0" stroke-width="7.6"/>
<path d="M859,446 Q862,463 889,466.6" stroke="#4848ff" stroke-width="1.6"/>
<path d="M855.6,440 L752.6,612" stroke="#0000dc" stroke-width="8.8"/>
<path d="M854.4,439 L751.4,611" stroke="#2c2cff" stroke-width="2"/>
</g>
<!-- box-shaped fitting -->
<polygon points="879,419.5 891.5,402.8 909,409 897,426" fill="#ea8414"/>
<polygon points="879,419.5 897,426 896,446 878,439.6" fill="#d87408"/>
<polygon points="897,426 909,409 908,432 896,446" fill="#c06004"/>
<polygon points="903,430 914,428 917,442 912,452 900,450 899,440" fill="#d46a0a"/><path d="M886,469.4 Q904,469 907.8,447" fill="none" stroke="#0a0af0" stroke-width="7.6"/><path d="M886,466.6 Q901,466 905,447" fill="none" stroke="#4848ff" stroke-width="1.4"/>
<polygon points="905.6,431 911,429 909.4,439 903.6,441" fill="#10d4ea"/>
<g stroke-linecap="butt" fill="none">
<path d="M886.4,455 L797.2,612" stroke="#00e4f0" stroke-width="8"/>
<path d="M885,454.2 L795.8,611.2" stroke="#a8ffff" stroke-width="1.8"/>
<path d="M915,485 L839.5,612" stroke="#f0f000" stroke-width="8"/>
<path d="M913.6,484.2 L838.1,611.2" stroke="#ffff9c" stroke-width="1.8"/>
<path d="M940,462 L940.4,474 Q943,486 966,480" stroke="#e80000" stroke-width="8.4"/>
<path d="M967.6,474 L885.5,612" stroke="#ec0000" stroke-width="9.2"/>
<path d="M966,473 L884,611" stroke="#ff5050" stroke-width="2"/>
</g>
<circle cx="855.2" cy="437.6" r="6.6" fill="#0a0af0"/><circle cx="855" cy="442.6" r="6.4" fill="#0a0af0"/>
<circle cx="967.8" cy="475" r="7.2" fill="#ec0000"/><circle cx="971.4" cy="484.6" r="5" fill="#d80000"/>
<!-- small orange fittings -->
<g fill="#d8660c">
<polygon points="912.6,402.4 922,405 920.2,410 910.8,407.4"/>
<polygon points="948,415 957.6,417.6 955.8,422.6 946.2,420"/>
<polygon points="871.6,465.6 884.6,470 881,481.6 868,477.2"/>
<polygon points="941,430 951.6,433 946,458 935.4,455"/>
<polygon points="938,452 950,456 946,470 934,466"/>
<polygon points="906,479.6 920,484 915.6,495.6 901.6,491.2"/>
</g>
<g fill="#f2a458"><polygon points="912.6,402.4 922,405 921.4,406.6 912,404"/><polygon points="948,415 957.6,417.6 957,419.2 947.4,416.6"/><polygon points="871.6,465.6 884.6,470 884,471.8 871,467.4"/><polygon points="906,479.6 920,484 919.4,485.8 905.4,481.4"/></g>
<rect x="911.6" y="431.6" width="7.6" height="6.2" fill="#1010c8" transform="rotate(14 915 434)"/>
<polygon points="947.6,444 956.6,446.4 955.4,450.6 946.4,448.2" fill="#e81010"/>
<polygon points="940,442 943.4,443 941.4,451 938,450" fill="#e8e000"/>
<g fill="#f4dca4" stroke="#a87830" stroke-width="0.6"><circle cx="885.1" cy="446" r="3.4"/><circle cx="893.6" cy="449.6" r="3.4"/></g>
<rect x="916.4" y="427" width="24.8" height="54.4" rx="11" fill="#c8a88c" fill-opacity="0.82" stroke="#6aa2dc" stroke-width="1" transform="rotate(2 929 454)"/>
<rect x="921.6" y="438" width="14" height="22" fill="#b08c6c" fill-opacity="0.55" transform="rotate(2 929 454)"/>
<g fill="#f4dca4" stroke="#a87830" stroke-width="0.6"><circle cx="918.6" cy="461.2" r="3.4"/><circle cx="926.4" cy="464.4" r="3.4"/></g>
<polygon points="917,478 925,480.6 921.6,488 914,485" fill="#3ca4dc" fill-opacity="0.85"/>
<!-- nav wheel -->
<g transform="translate(1124.2,205)">
<path fill-rule="evenodd" fill="#ffffff" fill-opacity="0.56" d="M-45.6,0 A45.6,45.6 0 1 0 45.6,0 A45.6,45.6 0 1 0 -45.6,0 Z M-27.4,0 A27.4,27.4 0 1 1 27.4,0 A27.4,27.4 0 1 1 -27.4,0 Z"/>
<path fill-rule="evenodd" fill="#ffffff" fill-opacity="0.56" d="M-25.2,0 A25.2,25.2 0 1 0 25.2,0 A25.2,25.2 0 1 0 -25.2,0 Z M-16,0 A16,16 0 1 1 16,0 A16,16 0 1 1 -16,0 Z"/>
<g stroke="#35322a" stroke-width="1.9">
<path d="M25.3,10.5 L42.1,17.4 M10.5,25.3 L17.4,42.1 M-10.5,25.3 L-17.4,42.1 M-25.3,10.5 L-42.1,17.4 M-25.3,-10.5 L-42.1,-17.4 M-10.5,-25.3 L-17.4,-42.1 M10.5,-25.3 L17.4,-42.1 M25.3,-10.5 L42.1,-17.4"/>
<path d="M-25.2,0 H-16 M16,0 H25.2"/>
</g>
</g>
<!-- side buttons -->
<g>
<rect x="1177.3" y="158.3" width="16" height="15.6" fill="#fff" fill-opacity="0.62"/>
<rect x="1177.3" y="177.3" width="16" height="15.2" fill="#fff" fill-opacity="0.5"/>
<rect x="1177.3" y="196.7" width="16" height="15.6" fill="#fffdf4" fill-opacity="0.86"/>
<rect x="1177.3" y="216" width="16" height="15.6" fill="#fff" fill-opacity="0.7"/>
<rect x="1177.3" y="236" width="16" height="15.6" fill="#fff" fill-opacity="0.85"/>
<path d="M1180.6,166.6 L1185.3,161.6 L1190,166.6 M1181.8,166 V171 H1188.8 V166" fill="#8aa0b4" stroke="#2a3640" stroke-width="1"/>
<path d="M1181.6,183 A4.2,4.2 0 1 0 1185.6,180.6" fill="none" stroke="#8cc4e8" stroke-width="1.1"/><path d="M1181,180.4 L1181.4,183.6 L1184.4,182.8" fill="none" stroke="#2a9be0" stroke-width="1"/>
<path d="M1189,222 A4.2,4.2 0 1 1 1185,219.6" fill="none" stroke="#8cc4e8" stroke-width="1.1"/><path d="M1189.6,219.4 L1189.2,222.6 L1186.2,221.8" fill="none" stroke="#2a9be0" stroke-width="1"/>
<text x="1185.3" y="208.2" text-anchor="middle" font-family="Liberation Sans, DejaVu Sans, sans-serif" font-size="9.2" fill="#1a1a1a">10</text>
<circle cx="1185.3" cy="243.8" r="2.9" fill="none" stroke="#222" stroke-width="1.8"/>
<g stroke="#222" stroke-width="1.5"><path d="M1185.3,239 V248.6 M1180.5,243.8 H1190.1 M1181.9,240.4 L1188.7,247.2 M1188.7,240.4 L1181.9,247.2"/></g>
<circle cx="1185.3" cy="243.8" r="1.5" fill="#e4e4e4"/>
</g>
<path d="M44.4,586 L48.4,581.4 L52.4,586" fill="none" stroke="#f4f0dc" stroke-width="1"/>
</g>
</svg>
<div id="bottom"><svg class="b" style="left:0;top:0" width="130" height="14" viewBox="0 0 130 14"><path d="M2.4,1 H46.6 L42.4,12 H6.8 Z" fill="#6e6e6e"/><path d="M47.4,1 L52.6,12.2" stroke="#111" stroke-width="1.4" fill="none"/><path d="M99.6,1 L95.6,12.2" stroke="#111" stroke-width="1.4" fill="none"/><rect x="104.2" y="0.8" width="13.6" height="11.6" fill="#242528" stroke="#494b50" stroke-width="0.8"/><path d="M107.4,6.4 H114.6 M111,2.8 V10" stroke="#f0f0f0" stroke-width="1.4"/></svg><span class="t" id="t35" style="left:10.20px;top:2.64px;font-size:9.4px;letter-spacing:0.177px;color:#f2f2f2;font-weight:bold;">Model</span><span class="t" id="t36" style="left:59.70px;top:2.64px;font-size:9.4px;letter-spacing:-0.244px;color:#e8e8e8;">Sheet2</span><span class="t" id="t37" style="left:1.60px;top:19.04px;font-size:9.4px;letter-spacing:-0.413px;color:#e8e8e8;">FLUID DESK BIM 2024 x64</span><div class="sb on" style="left:254.5px;width:28.5px"></div><span class="t" id="t38" style="left:258.90px;top:19.04px;font-size:9.4px;letter-spacing:-0.735px;color:#ececec;">Snap</span><div class="sb" style="left:288.7px;width:25.80000000000001px"></div><span class="t" id="t39" style="left:293.10px;top:19.04px;font-size:9.4px;letter-spacing:-0.240px;color:#ececec;">Grid</span><div class="sb on" style="left:319.5px;width:33.0px"></div><span class="t" id="t40" style="left:323.90px;top:19.04px;font-size:9.4px;letter-spacing:0.187px;color:#ececec;">Ortho</span><div class="sb" style="left:358.7px;width:29.30000000000001px"></div><span class="t" id="t41" style="left:363.10px;top:19.04px;font-size:9.4px;letter-spacing:-0.348px;color:#ececec;">Polar</span><div class="sb" style="left:393.7px;width:33.30000000000001px"></div><span class="t" id="t42" style="left:398.10px;top:19.04px;font-size:9.4px;letter-spacing:-0.914px;color:#ececec;">ESnap</span><div class="sb on" style="left:433px;width:34.5px"></div><span class="t" id="t43" style="left:437.40px;top:19.04px;font-size:9.4px;letter-spacing:-0.729px;color:#ececec;">ETrack</span><div class="sb" style="left:473px;width:37.69999999999999px"></div><span class="t" id="t44" style="left:477.40px;top:19.04px;font-size:9.4px;letter-spacing:0.149px;color:#ececec;">QInput</span><div class="sb on" style="left:515.5px;width:80.0px"></div><span class="t" id="t45" style="left:519.90px;top:19.04px;font-size:9.4px;letter-spacing:-0.045px;color:#ececec;">Cycling Selection</span><div class="sb" style="left:600.5px;width:42.0px"></div><span class="t" id="t46" style="left:604.90px;top:19.04px;font-size:9.4px;letter-spacing:-0.055px;color:#ececec;">LWeight</span><div class="sb on" style="left:648px;width:39.5px"></div><span class="t" id="t47" style="left:652.40px;top:19.04px;font-size:9.4px;letter-spacing:-0.661px;color:#ececec;">MODEL</span><div class="sb on" style="left:693px;width:64px"></div><span class="t" id="t48" style="left:697.40px;top:19.04px;font-size:9.4px;letter-spacing:-0.367px;color:#ececec;">Dynamic CCS</span><div class="sb on" style="left:762px;width:48px"></div><span class="t" id="t49" style="left:766.40px;top:19.04px;font-size:9.4px;letter-spacing:0.241px;color:#ececec;">AMonitor</span><div class="sb on" style="left:815.5px;width:71.2px;border-color:#4a4c51"></div><span class="t" id="t50" style="left:818.70px;top:19.04px;font-size:9.4px;letter-spacing:0.051px;color:#ececec;">Annotation</span><svg class="b" style="left:876px;top:21.4px" width="7" height="5" viewBox="0 0 7 5"><polygon points="0.6,0.6 6,0.6 3.3,3.6" fill="#e8e8e8"/></svg><span class="t" id="t51" style="left:891.20px;top:19.04px;font-size:9.4px;letter-spacing:0.141px;color:#e4e4e4;">(1/8" = 1'-0")</span><span class="t" id="t52" style="left:951.70px;top:19.04px;font-size:9.4px;letter-spacing:-0.270px;color:#e4e4e4;">(443020.9864,74297.1630,0.0000)</span></div><div id="dlg"><div class="cap"></div><svg class="b" style="left:4.8px;top:4.0px" width="14" height="13" viewBox="0 0 14 13"><g fill="none" stroke="#1616a2" stroke-width="1.9" stroke-linejoin="round"><polyline points="3,4 6.8,0.9 9.4,4 12.4,1.6"/><polyline points="0.6,5.3 3.7,7.5 6.8,4.8 9.9,7.5"/><polyline points="3.3,10.9 6.5,8.4 9.6,11.5 12.1,9.4"/></g></svg><span class="t" id="t53" style="left:20.60px;top:6.04px;font-size:9.4px;letter-spacing:-0.015px;color:#000;">FLM - Modyfikacja elementu</span><svg class="b" style="left:524.8px;top:5.8px" width="9" height="9" viewBox="0 0 9 9"><path d="M0.8,0.8 L8,8 M8,0.8 L0.8,8" stroke="#222" stroke-width="0.9"/></svg><span class="t" id="t54" style="left:22.00px;top:33.57px;font-size:8.3px;letter-spacing:0.104px;color:#000;">Typ:</span><div class="fld" style="left:42.0px;top:29.0px;width:184.4px;height:15.0px;"></div><span class="t" id="t55" style="left:45.40px;top:32.97px;font-size:8.3px;letter-spacing:-0.181px;color:#000;">AB-QM 4.0</span><span class="t" id="t56" style="left:11.00px;top:52.37px;font-size:8.3px;letter-spacing:-0.134px;color:#000;">Nazwa:</span><div class="fld" style="left:42.0px;top:48.4px;width:184.4px;height:14.8px;"></div><span class="t" id="t57" style="left:45.40px;top:51.77px;font-size:8.3px;letter-spacing:0.046px;color:#000;">Zawory regulacyjne niezależne od ciłnienia</span><span class="t" id="t58" style="left:8.00px;top:71.37px;font-size:8.3px;letter-spacing:0.005px;color:#000;">System:</span><div class="inp" style="left:42.0px;top:67.0px;width:74.4px;height:14.6px;"></div><span class="t" id="t59" style="left:44.00px;top:69.97px;font-size:8.3px;letter-spacing:-0.609px;color:#000;">H1</span><svg class="b" style="left:106.8px;top:73.2px" width="7.4" height="4.2" viewBox="0 0 7.4 4.2"><polyline points="0.5,0.5 3.70,3.20 6.90,0.5" fill="none" stroke="#444" stroke-width="0.9"/></svg><div class="fld" style="left:122.0px;top:67.4px;width:104.4px;height:14.2px;"></div><span class="t" id="t60" style="left:125.40px;top:70.37px;font-size:8.3px;letter-spacing:-0.141px;color:#000;">Grzewczy wtórny</span><span class="t" id="t61" style="left:11.60px;top:90.57px;font-size:8.3px;letter-spacing:-0.161px;color:#222;">Numer:</span><div class="fld" style="left:42.0px;top:86.0px;width:37.4px;height:14.4px;"></div><span class="t" id="t62" style="left:95.60px;top:90.57px;font-size:8.3px;color:#000;">Poziom [m]:</span><div class="btn" style="left:143.4px;top:86.2px;width:37.0px;height:14.4px;"></div><span class="t" id="t63" style="left:146.00px;top:89.77px;font-size:8.3px;letter-spacing:0.147px;color:#000;">OR</span><svg class="b" style="left:170.8px;top:92.2px" width="7.4" height="4.2" viewBox="0 0 7.4 4.2"><polyline points="0.5,0.5 3.70,3.20 6.90,0.5" fill="none" stroke="#444" stroke-width="0.9"/></svg><div class="inp" style="left:182.0px;top:86.2px;width:45.0px;height:14.6px;"></div><span class="t" id="t64" style="left:205.60px;top:89.77px;font-size:8.3px;letter-spacing:-0.441px;color:#000;">2.853</span><div class="b" style="left:6.5px;top:107.8px;width:218.8px;height:202.6px;background:#fbfbfb;border:1px solid #dedede;border-top-color:#cfcfcf"></div><svg class="b" style="left:8.75px;top:110.30px;background:#000" width="214.65" height="197.80" viewBox="33.75 186.30 214.65 197.80"><g fill="none" stroke="#e6dc00" stroke-width="0.9"><path d="M85.1,198.2 V364.3 M85.1,198.2 H160 M85.1,307.2 H125.8 M85.1,339 H139"/><path d="M129,321 V352.5 M183.6,321 V352.5 M129,351.9 H183.6"/><path d="M197.3,271 V342.9 M186,296.7 H197.3 M186,317.4 H197.3"/></g><g fill="#e6dc00"><polygon points="85.1,198.2 82.6,210.7 87.6,210.7"/><polygon points="85.1,306.8 82.6,294.4 87.6,294.4"/><polygon points="85.1,339 82.6,352 87.6,352"/><polygon points="129,351.9 143,349.8 143,354"/><polygon points="183.6,351.9 170.8,349.8 170.8,354"/><polygon points="197.3,296.7 195.6,283.8 199,283.8"/><polygon points="197.3,317.4 195.6,330 199,330"/></g><g font-family="Liberation Sans, DejaVu Sans, sans-serif" fill="#e6dc00" stroke="#000" stroke-width="0.55"><text transform="translate(81.7,270) rotate(-90)" font-size="24" textLength="29" lengthAdjust="spacingAndGlyphs">H2</text><text transform="translate(81.7,334.8) rotate(-90)" font-size="24" textLength="23.4" lengthAdjust="spacingAndGlyphs">H1</text><text transform="translate(217.8,313.4) rotate(-90)" font-size="22" textLength="12.4" lengthAdjust="spacingAndGlyphs">b</text><text x="152.4" y="373" font-size="23.7" textLength="10" lengthAdjust="spacingAndGlyphs">L</text></g><g fill="none" stroke="#00f000" stroke-width="1" stroke-linejoin="round"><path d="M105.6,218.3 Q128,205 152.6,199.2 L177.5,198.4 L187,237.5 L183,243 Q150,252 118,261.5 L108,233 Z"/><path d="M107,219.6 Q129,206.4 152.8,200.6 L176.4,199.8"/><path d="M108,233 Q112,238 120,236 Q140,230 160,218 Q170,213 181,212"/><path d="M110.4,221 L121.6,260.4 M113.4,220 L124.6,259.4"/><path d="M118,261.5 Q150,250 186,236 M121,262.6 Q152,252 187.6,240.4"/><path d="M177.5,198.4 L180.6,199.2 L189.6,236.8 L195.7,269 L191,270.5 L185,245"/><path d="M187,237.5 L192.6,268.6"/><path d="M160.6,254.6 q4,3 10.6,-1.6 M131.5,260.5 L135,270 M151.6,254 L155,263.4 M140,258 L142.4,267.4 M136.6,263.6 L152.6,258.6"/><path d="M136.4,281 L142,296.4 M158.6,273 L164.6,296 M140,292 L160,286.6 M139.4,289.6 L159.6,284"/><path d="M168.6,278 L156,300 L162,304 L178.6,281.6 Z M170.6,271.6 L182.4,279 L180,283 L168.4,276 Z M172.4,270 q6,-2 10.6,4.6 M183,278.4 q4,1 3.4,4.4 q-2,2 -4.4,0"/><path d="M128.6,296.3 H183.6 V317.8 H128.6 Z M136.4,296.3 V317.8 M175.6,296.3 V317.8 M138.6,296.3 V317.8 M173.6,296.3 V317.8"/><path d="M138.2,314.5 L143,339.4 L177.5,328.9 L174.6,308.7"/><path d="M139,319 L175.4,312.6 M139.8,323 L176,316 M140.6,326.6 L176.4,319.6 M141.4,330 L176.8,322.6 M142,333.4 L177,325.6 M142.6,336.6 L177.3,327.6 M140.2,321 L175.7,314.3 M141,328.3 L176.6,321.1 M141.8,331.8 L176.9,324.2"/><path d="M138,298 L150,312 M150,298 q5,4 12,3 M146,300 L152,318 L160,316 L168,300 M156,304 L172,309 M142,306 L158,310 M160,310 q4,-4 10,-2 M158.6,313 q6,-3 12,-1"/></g><polygon points="128.6,271.6 155.5,263.4 158.3,272 132.5,280.6" fill="#00f000"/></svg><div class="b" style="left:7.2px;top:311.4px;width:37.8px;height:15.0px;background:#f0f0f0;border:1px solid #d6d6d6;border-top:none"></div><div class="b" style="left:44.8px;top:311.0px;width:41.0px;height:17.0px;background:#fff;border:1px solid #e2e2e2;border-top:none"></div><span class="t" id="t65" style="left:11.00px;top:314.27px;font-size:8.3px;letter-spacing:-0.011px;color:#000;">3D Slajd</span><span class="t" id="t66" style="left:50.00px;top:315.47px;font-size:8.3px;letter-spacing:-0.025px;color:#000;">2D Slajd</span><div class="b" style="left:5.4px;top:331.0px;width:10.0px;height:10.0px;background:#fff;border:1px solid #333"></div><svg class="b" style="left:5.4px;top:331.0px" width="10" height="10" viewBox="0 0 10 10"><polyline points="2,5 4.2,7.2 8.2,2.6" fill="none" stroke="#111" stroke-width="1"/></svg><span class="t" id="t67" style="left:17.70px;top:331.97px;font-size:8.3px;letter-spacing:0.129px;color:#000;">Specyfikacja</span><span class="t" id="t68" style="left:246.00px;top:33.97px;font-size:8.3px;letter-spacing:-0.193px;color:#000;">Producent:</span><div class="fld" style="left:289.2px;top:29.0px;width:184.8px;height:15.0px;"></div><span class="t" id="t69" style="left:293.00px;top:33.37px;font-size:8.3px;letter-spacing:-0.053px;color:#000;">DANFOSS_2023</span><span class="t" id="t70" style="left:256.60px;top:52.97px;font-size:8.3px;letter-spacing:-0.381px;color:#222;">Str. Kat.:</span><div class="fld" style="left:289.2px;top:48.4px;width:67.2px;height:14.8px;"></div><div class="b" style="left:361.0px;top:49.0px;width:54.0px;height:14.8px;background:#cccccc;border:1px solid #bfbfbf"></div><span class="t" id="t71" style="left:375.00px;top:52.57px;font-size:8.3px;letter-spacing:-0.086px;color:#838383;">Cennik</span><div class="b" style="left:420.0px;top:49.0px;width:54.0px;height:14.8px;background:#cccccc;border:1px solid #bfbfbf"></div><span class="t" id="t72" style="left:432.40px;top:52.57px;font-size:8.3px;letter-spacing:0.177px;color:#838383;">Katalog</span><span class="t" id="t73" style="left:260.00px;top:71.97px;font-size:8.3px;letter-spacing:-0.075px;color:#000;">Uwagi:</span><div class="inp" style="left:289.2px;top:67.4px;width:184.8px;height:14.4px;"></div><svg class="b" style="left:464.2px;top:73.2px" width="7.4" height="4.2" viewBox="0 0 7.4 4.2"><polyline points="0.5,0.5 3.70,3.20 6.90,0.5" fill="none" stroke="#444" stroke-width="0.9"/></svg><div class="b" style="left:234.0px;top:106.4px;width:269.6px;height:371.0px;background:#f0f0f0;border:1px solid;border-color:#fff #8e8e8e #8e8e8e #fff;box-shadow:1px 1px 0 #d8d8d8"></div><div class="b" style="left:235.0px;top:94.6px;width:44.4px;height:12.0px;background:#f0f0f0;border:1px solid;border-color:#fff #c4c4c4 transparent #fff"></div><div class="b" style="left:320.0px;top:94.6px;width:43.8px;height:12.0px;background:#f0f0f0;border:1px solid;border-color:#fff #6e6e6e transparent #f0f0f0"></div><div class="b" style="left:279.6px;top:92.4px;width:40.4px;height:15.6px;background:#f0f0f0;border:1px solid;border-color:#fff #5c5c5c transparent #fff;border-right-width:1.4px"></div><span class="t" id="t74" style="left:238.40px;top:94.97px;font-size:8.3px;letter-spacing:-0.035px;color:#000;">Parametry</span><span class="t" id="t75" style="left:284.40px;top:95.37px;font-size:8.3px;letter-spacing:0.023px;color:#000;">Siłownik</span><span class="t" id="t76" style="left:322.40px;top:94.97px;font-size:8.3px;letter-spacing:0.023px;color:#000;">Przepływy</span><span class="t" id="t77" style="left:246.00px;top:122.57px;font-size:8.3px;letter-spacing:0.018px;color:#000;">Typ regulatora:</span><div class="inp" style="left:364.0px;top:119.0px;width:100.8px;height:13.0px;"></div><div class="b" style="left:366.0px;top:121.2px;width:83.4px;height:8.8px;background:#0078d7"></div><span class="t" id="t78" style="left:366.60px;top:122.37px;font-size:8.3px;letter-spacing:-0.126px;color:#fff;">AME 110 NL</span><div class="b" style="left:366.6px;top:129.4px;width:45px;height:0;border-top:1px dotted #cfe4f8"></div><svg class="b" style="left:454.6px;top:124.6px" width="7.4" height="4.2" viewBox="0 0 7.4 4.2"><polyline points="0.5,0.5 3.70,3.20 6.90,0.5" fill="none" stroke="#444" stroke-width="0.9"/></svg><span class="t" id="t79" style="left:246.00px;top:141.97px;font-size:8.3px;letter-spacing:0.187px;color:#000;">Prędkość [s/mm]</span><div class="fld" style="left:364.0px;top:138.1px;width:74.8px;height:14.6px;border-color:#a6a6a6 #fbfbfb #fbfbfb #a6a6a6"></div><span class="t" id="t80" style="left:366.60px;top:141.77px;font-size:8.3px;letter-spacing:-0.434px;color:#000;">24</span><span class="t" id="t81" style="left:246.00px;top:160.69px;font-size:8.3px;letter-spacing:-0.020px;color:#000;">Normalnie zamkniete (otwarte)</span><div class="fld" style="left:364.0px;top:156.8px;width:74.8px;height:14.6px;border-color:#a6a6a6 #fbfbfb #fbfbfb #a6a6a6"></div><span class="t" id="t82" style="left:246.00px;top:179.41px;font-size:8.3px;letter-spacing:0.009px;color:#000;">Funkcja bezpieczeństwa</span><div class="fld" style="left:364.0px;top:175.5px;width:74.8px;height:14.6px;border-color:#a6a6a6 #fbfbfb #fbfbfb #a6a6a6"></div><span class="t" id="t83" style="left:246.00px;top:198.13px;font-size:8.3px;letter-spacing:0.111px;color:#000;">Napięcie zasilające (Zasilanie)</span><div class="fld" style="left:364.0px;top:194.3px;width:74.8px;height:14.6px;border-color:#a6a6a6 #fbfbfb #fbfbfb #a6a6a6"></div><span class="t" id="t84" style="left:366.60px;top:197.93px;font-size:8.3px;letter-spacing:0.043px;color:#000;">24 V ac</span><span class="t" id="t85" style="left:246.00px;top:216.85px;font-size:8.3px;letter-spacing:0.048px;color:#000;">Sygnał sterujący</span><div class="fld" style="left:364.0px;top:213.0px;width:125.3px;height:14.6px;border-color:#a6a6a6 #fbfbfb #fbfbfb #a6a6a6"></div><span class="t" id="t86" style="left:366.60px;top:216.65px;font-size:8.3px;letter-spacing:-0.164px;color:#000;">0-10 V, 2-10V, 0-20mA, 4-20mA</span><span class="t" id="t87" style="left:246.00px;top:235.57px;font-size:8.3px;color:#000;">Sygnał zwrotny</span><div class="fld" style="left:364.0px;top:231.7px;width:74.8px;height:14.6px;border-color:#a6a6a6 #fbfbfb #fbfbfb #a6a6a6"></div><span class="t" id="t88" style="left:366.60px;top:235.37px;font-size:8.3px;letter-spacing:0.191px;color:#000;">No</span><span class="t" id="t89" style="left:246.00px;top:254.29px;font-size:8.3px;letter-spacing:0.052px;color:#000;">Skok [mm]</span><div class="fld" style="left:364.0px;top:250.4px;width:74.8px;height:14.6px;border-color:#a6a6a6 #fbfbfb #fbfbfb #a6a6a6"></div><span class="t" id="t90" style="left:246.00px;top:273.01px;font-size:8.3px;letter-spacing:0.087px;color:#000;">Czas pełnego przejścia</span><div class="fld" style="left:364.0px;top:269.1px;width:74.8px;height:14.6px;border-color:#a6a6a6 #fbfbfb #fbfbfb #a6a6a6"></div><span class="t" id="t91" style="left:246.00px;top:291.73px;font-size:8.3px;letter-spacing:0.088px;color:#000;">Protokół komunikacyjny</span><div class="fld" style="left:364.0px;top:287.9px;width:125.3px;height:14.6px;border-color:#a6a6a6 #fbfbfb #fbfbfb #a6a6a6"></div><span class="t" id="t92" style="left:246.00px;top:310.45px;font-size:8.3px;letter-spacing:0.145px;color:#000;">Obudowa</span><div class="fld" style="left:364.0px;top:306.6px;width:74.8px;height:14.6px;border-color:#a6a6a6 #fbfbfb #fbfbfb #a6a6a6"></div><span class="t" id="t93" style="left:366.60px;top:310.25px;font-size:8.3px;letter-spacing:-0.109px;color:#000;">IP 42</span><span class="t" id="t94" style="left:246.00px;top:329.17px;font-size:8.3px;letter-spacing:0.034px;color:#000;">Inne opcje</span><div class="fld" style="left:364.0px;top:325.3px;width:125.3px;height:14.6px;border-color:#a6a6a6 #fbfbfb #fbfbfb #a6a6a6"></div><span class="t" id="t95" style="left:246.00px;top:366.61px;font-size:8.3px;letter-spacing:-0.073px;color:#000;">Nr kat.</span><div class="fld" style="left:364.0px;top:362.7px;width:74.8px;height:14.6px;border-color:#a6a6a6 #fbfbfb #fbfbfb #a6a6a6"></div><span class="t" id="t96" style="left:366.60px;top:366.41px;font-size:8.3px;letter-spacing:-0.071px;color:#000;">082H8057</span><div class="b" style="left:318.0px;top:482.4px;width:56.4px;height:16.6px;background:#e5f1fb;border:1px solid #0078d7"></div><span class="t" id="t97" style="left:340.60px;top:486.97px;font-size:8.3px;letter-spacing:-0.600px;color:#000;">OK</span><div class="btn" style="left:379.0px;top:482.4px;width:62.0px;height:16.6px;"></div><span class="t" id="t98" style="left:396.60px;top:486.97px;font-size:8.3px;letter-spacing:0.194px;color:#000;">Cancel</span><div class="btn" style="left:445.4px;top:482.4px;width:61.6px;height:16.6px;"></div><span class="t" id="t99" style="left:466.60px;top:486.97px;font-size:8.3px;letter-spacing:0.441px;color:#000;">Help</span><div class="btn" style="left:513.0px;top:482.4px;width:21.4px;height:16.6px;"></div><span class="t" id="t100" style="left:519.00px;top:486.97px;font-size:8.3px;letter-spacing:-0.303px;color:#000;">&gt;&gt;</span></div><svg class="b" style="position:absolute;left:362.4px;top:571.4px" width="10" height="14" viewBox="0 0 10 14"><path d="M0.6,0.6 V10.6 L3,8.4 L4.8,12.6 L6.4,11.9 L4.6,7.8 H8 Z" fill="#fff" stroke="#111" stroke-width="0.7" stroke-linejoin="round"/></svg></div>
</body>
</html>
